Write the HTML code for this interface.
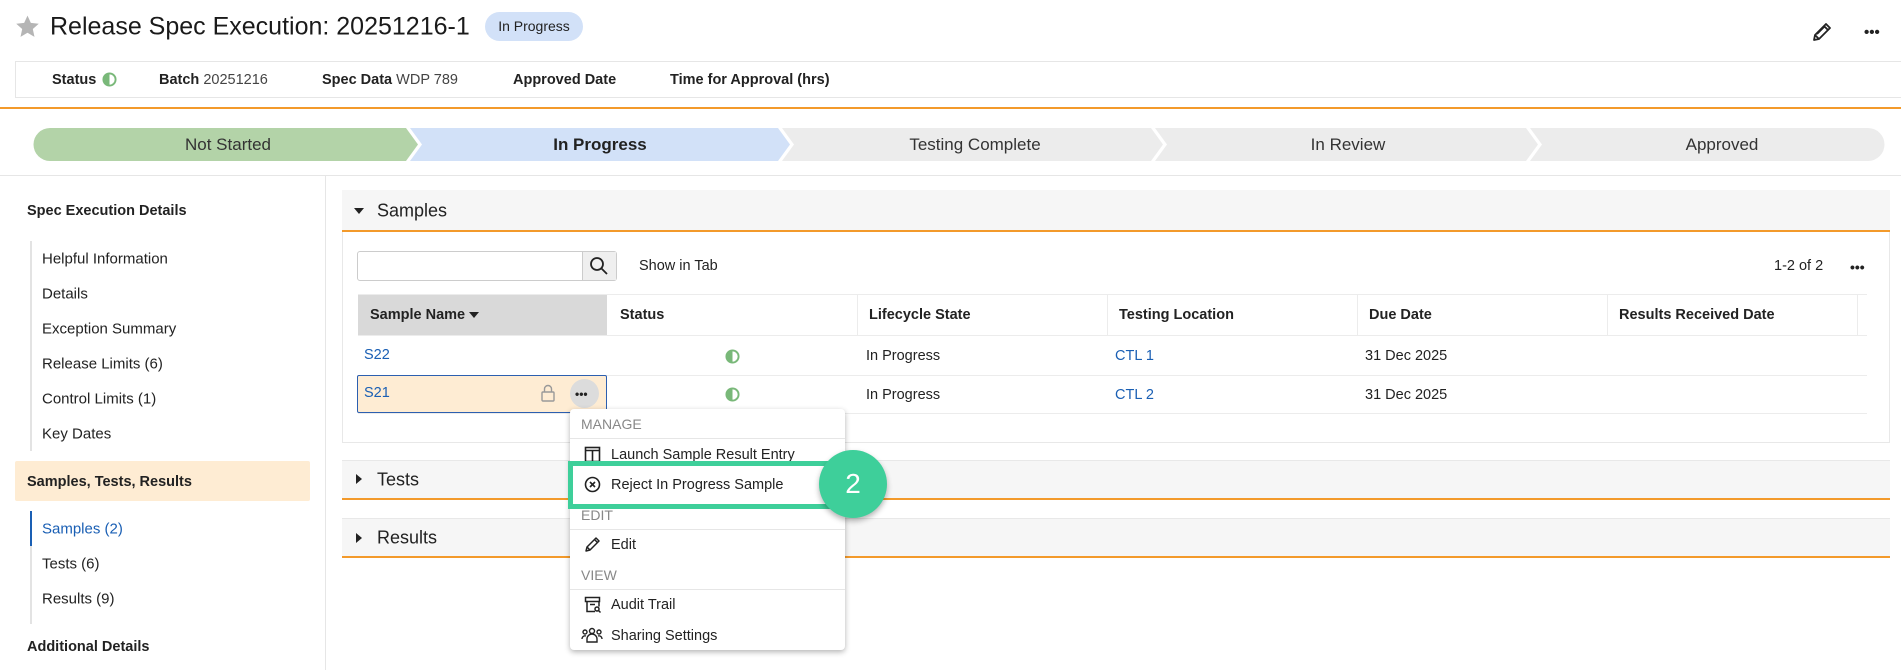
<!DOCTYPE html>
<html><head><meta charset="utf-8">
<style>
*{box-sizing:border-box;margin:0;padding:0}
body{width:1901px;height:670px;overflow:hidden;background:#fff;font-family:"Liberation Sans",Arial,sans-serif;color:#222;position:relative;font-size:15px}
.a{position:absolute;white-space:nowrap}
.b{font-weight:bold}
.blue{color:#1a5fb4}
.vc{transform:translateY(-50%)}
</style></head><body>

<!-- title -->
<svg class="a" style="left:15px;top:14px" width="25" height="25" viewBox="0 0 24 24"><path d="M12 1.5l3.2 7 7.6.8-5.7 5.1 1.6 7.5L12 18l-6.7 3.9 1.6-7.5L1.2 9.3l7.6-.8z" fill="#b5b5b5"/></svg>
<div class="a vc" style="left:50px;top:27px;font-size:25px;color:#1a1a1a">Release Spec Execution: 20251216-1</div>
<div class="a" style="left:485px;top:12px;width:98px;height:29px;border-radius:15px;background:#d2e1f8;font-size:14px;line-height:29px;text-align:center;color:#222">In Progress</div>
<svg class="a" style="left:1810px;top:20px" width="24" height="24" viewBox="0 0 24 24" fill="none" stroke="#222" stroke-width="1.8" stroke-linejoin="round"><path d="M4 20l1-5L16 4l4 4L9 19z M14 6l4 4 M5 15l4 4 M7 14l8-8"/></svg>
<div class="a" style="left:1864px;top:29px;font-size:15px;line-height:8px;letter-spacing:0px;font-weight:bold">•••</div>

<!-- info bar -->
<div class="a" style="left:15px;top:61px;width:1886px;height:37px;border:1px solid #e6e6e6;border-right:none"></div>
<div class="a vc" style="left:52px;top:80px;font-size:14.5px"><span class="b">Status</span></div>
<svg class="a" style="left:102px;top:72px" width="15" height="15" viewBox="0 0 16 16"><circle cx="8" cy="8" r="6.5" fill="#fff" stroke="#79b879" stroke-width="2"/><path d="M8 1.5a6.5 6.5 0 0 0 0 13z" fill="#79b879"/></svg>
<div class="a vc" style="left:159px;top:80px;font-size:14.5px"><span class="b">Batch</span> <span style="color:#444">20251216</span></div>
<div class="a vc" style="left:322px;top:80px;font-size:14.5px"><span class="b">Spec Data</span> <span style="color:#444">WDP 789</span></div>
<div class="a vc" style="left:513px;top:80px;font-size:14.5px" ><span class="b">Approved Date</span></div>
<div class="a vc" style="left:670px;top:80px;font-size:14.5px"><span class="b">Time for Approval (hrs)</span></div>
<div class="a" style="left:0;top:107px;width:1901px;height:2px;background:#f39a2b"></div>

<!-- path bar -->
<svg class="a" style="left:0;top:128px" width="1901" height="34" viewBox="0 128 1901 34">
<path d="M50 128H406L418 144.5L406 161H50A16.5 16.5 0 0 1 50 128Z" fill="#b3d3a8"/>
<path d="M410 128H778L790 144.5L778 161H410L422 144.5Z" fill="#d2e1f8"/>
<path d="M782 128H1151L1163 144.5L1151 161H782L794 144.5Z" fill="#ececec"/>
<path d="M1155 128H1526L1538 144.5L1526 161H1155L1167 144.5Z" fill="#ececec"/>
<path d="M1530 128H1868A16.5 16.5 0 0 1 1868 161H1530L1542 144.5Z" fill="#ececec"/>
</svg>
<div class="a vc" style="left:228px;top:145px;font-size:17px;transform:translate(-50%,-50%);color:#333">Not Started</div>
<div class="a vc b" style="left:600px;top:145px;font-size:17px;transform:translate(-50%,-50%)">In Progress</div>
<div class="a vc" style="left:975px;top:145px;font-size:17px;transform:translate(-50%,-50%);color:#333">Testing Complete</div>
<div class="a vc" style="left:1348px;top:145px;font-size:17px;transform:translate(-50%,-50%);color:#333">In Review</div>
<div class="a vc" style="left:1722px;top:145px;font-size:17px;transform:translate(-50%,-50%);color:#333">Approved</div>
<div class="a" style="left:0;top:175px;width:1901px;height:1px;background:#e6e6e6"></div>

<!-- sidebar -->
<div class="a" style="left:325px;top:176px;width:1px;height:494px;background:#e6e6e6"></div>
<div class="a vc b" style="left:27px;top:211px;font-size:14.5px">Spec Execution Details</div>
<div class="a" style="left:30px;top:241px;width:2px;height:210px;background:#e3e3e3"></div>
<div class="a vc" style="left:42px;top:259px">Helpful Information</div>
<div class="a vc" style="left:42px;top:294px">Details</div>
<div class="a vc" style="left:42px;top:329px">Exception Summary</div>
<div class="a vc" style="left:42px;top:364px">Release Limits (6)</div>
<div class="a vc" style="left:42px;top:399px">Control Limits (1)</div>
<div class="a vc" style="left:42px;top:434px">Key Dates</div>
<div class="a" style="left:15px;top:461px;width:295px;height:40px;background:#feecd3;border-radius:2px"></div>
<div class="a vc b" style="left:27px;top:482px;font-size:14.5px">Samples, Tests, Results</div>
<div class="a" style="left:30px;top:511px;width:2px;height:113px;background:#e3e3e3"></div>
<div class="a" style="left:30px;top:511px;width:2px;height:35px;background:#1a5fb4"></div>
<div class="a vc blue" style="left:42px;top:529px">Samples (2)</div>
<div class="a vc" style="left:42px;top:564px">Tests (6)</div>
<div class="a vc" style="left:42px;top:599px">Results (9)</div>
<div class="a vc b" style="left:27px;top:647px;font-size:14.5px">Additional Details</div>

<!-- Samples panel -->
<div class="a" style="left:342px;top:190px;width:1548px;height:253px;border:1px solid #e8e8e8"></div>
<div class="a" style="left:342px;top:190px;width:1548px;height:42px;background:#f6f6f6;border-bottom:2px solid #f39a2b"></div>
<div class="a" style="left:354px;top:208px;width:0;height:0;border-left:5px solid transparent;border-right:5px solid transparent;border-top:6px solid #222"></div>
<div class="a vc" style="left:377px;top:211px;font-size:18px">Samples</div>
<div class="a" style="left:357px;top:251px;width:260px;height:30px;border:1px solid #ccc;border-radius:3px"></div>
<div class="a" style="left:582px;top:252px;width:34px;height:28px;background:#efefef;border-left:1px solid #ccc"></div>
<svg class="a" style="left:589px;top:256px" width="20" height="20" viewBox="0 0 20 20" fill="none" stroke="#222" stroke-width="1.8"><circle cx="8" cy="8" r="6"/><path d="M12.5 12.5L18 18"/></svg>
<div class="a vc" style="left:639px;top:266px;font-size:14.5px">Show in Tab</div>
<div class="a vc" style="left:1774px;top:266px;font-size:14.5px">1-2 of 2</div>
<div class="a" style="left:1850px;top:263px;font-size:14px;line-height:8px;letter-spacing:0px;font-weight:bold">•••</div>

<!-- table -->
<div class="a" style="left:358px;top:294px;width:1509px;height:1px;background:#ececec"></div>
<div class="a" style="left:358px;top:295px;width:249px;height:41px;background:#d9d9d9"></div>
<div class="a" style="left:857px;top:295px;width:1px;height:41px;background:#ececec"></div>
<div class="a" style="left:1107px;top:295px;width:1px;height:41px;background:#ececec"></div>
<div class="a" style="left:1357px;top:295px;width:1px;height:41px;background:#ececec"></div>
<div class="a" style="left:1607px;top:295px;width:1px;height:41px;background:#ececec"></div>
<div class="a" style="left:1857px;top:295px;width:1px;height:41px;background:#ececec"></div>
<div class="a" style="left:358px;top:335px;width:1509px;height:1px;background:#ececec"></div>
<div class="a vc b" style="left:370px;top:315px;font-size:14.5px">Sample Name <span style="display:inline-block;border-left:5px solid transparent;border-right:5px solid transparent;border-top:6px solid #222;vertical-align:middle"></span></div>
<div class="a vc b" style="left:620px;top:315px;font-size:14.5px">Status</div>
<div class="a vc b" style="left:869px;top:315px;font-size:14.5px">Lifecycle State</div>
<div class="a vc b" style="left:1119px;top:315px;font-size:14.5px">Testing Location</div>
<div class="a vc b" style="left:1369px;top:315px;font-size:14.5px">Due Date</div>
<div class="a vc b" style="left:1619px;top:315px;font-size:14.5px">Results Received Date</div>

<div class="a vc blue" style="left:364px;top:355px;font-size:14.5px">S22</div>
<svg class="a" style="left:725px;top:349px" width="15" height="15" viewBox="0 0 16 16"><circle cx="8" cy="8" r="6.5" fill="#fff" stroke="#79b879" stroke-width="2"/><path d="M8 1.5a6.5 6.5 0 0 0 0 13z" fill="#79b879"/></svg>
<div class="a vc" style="left:866px;top:356px;font-size:14.5px">In Progress</div>
<div class="a vc blue" style="left:1115px;top:356px;font-size:14.5px">CTL 1</div>
<div class="a vc" style="left:1365px;top:356px;font-size:14.5px">31 Dec 2025</div>
<div class="a" style="left:358px;top:375px;width:1509px;height:1px;background:#ececec"></div>

<div class="a" style="left:357px;top:375px;width:250px;height:38px;background:#feecd3;border:1px solid #2c5fb0;border-radius:2px"></div>
<div class="a vc blue" style="left:364px;top:393px;font-size:14.5px">S21</div>
<svg class="a" style="left:540px;top:384px" width="16" height="18" viewBox="0 0 16 18" fill="none" stroke="#999" stroke-width="1.4"><rect x="2" y="8" width="12" height="9" rx="1"/><path d="M4.5 8V5a3.5 3.5 0 0 1 7 0v3"/></svg>
<div class="a" style="left:570px;top:379px;width:29px;height:29px;border-radius:50%;background:#dcdcdc"></div>
<div class="a" style="left:575px;top:390px;font-size:12px;line-height:8px;letter-spacing:0px;font-weight:bold">•••</div>
<svg class="a" style="left:725px;top:387px" width="15" height="15" viewBox="0 0 16 16"><circle cx="8" cy="8" r="6.5" fill="#fff" stroke="#79b879" stroke-width="2"/><path d="M8 1.5a6.5 6.5 0 0 0 0 13z" fill="#79b879"/></svg>
<div class="a vc" style="left:866px;top:395px;font-size:14.5px">In Progress</div>
<div class="a vc blue" style="left:1115px;top:395px;font-size:14.5px">CTL 2</div>
<div class="a vc" style="left:1365px;top:395px;font-size:14.5px">31 Dec 2025</div>
<div class="a" style="left:358px;top:413px;width:1509px;height:1px;background:#ececec"></div>

<!-- Tests / Results panels -->
<div class="a" style="left:342px;top:460px;width:1548px;height:40px;background:#f6f6f6;border-top:1px solid #e8e8e8;border-bottom:2px solid #f39a2b"></div>
<div class="a" style="left:356px;top:474px;width:0;height:0;border-top:5px solid transparent;border-bottom:5px solid transparent;border-left:6px solid #222"></div>
<div class="a vc" style="left:377px;top:480px;font-size:18px">Tests</div>
<div class="a" style="left:342px;top:518px;width:1548px;height:40px;background:#f6f6f6;border-top:1px solid #e8e8e8;border-bottom:2px solid #f39a2b"></div>
<div class="a" style="left:356px;top:533px;width:0;height:0;border-top:5px solid transparent;border-bottom:5px solid transparent;border-left:6px solid #222"></div>
<div class="a vc" style="left:377px;top:538px;font-size:18px">Results</div>

<!-- menu -->
<div class="a" style="left:570px;top:409px;width:275px;height:241px;background:#fff;border-radius:4px;box-shadow:0 2px 6px rgba(0,0,0,.3)"></div>
<div class="a vc" style="left:581px;top:424px;font-size:14px;color:#888">MANAGE</div>
<div class="a" style="left:570px;top:438px;width:275px;height:1px;background:#e6e6e6"></div>
<svg class="a" style="left:584px;top:446px" width="17" height="17" viewBox="0 0 17 17" fill="none" stroke="#222" stroke-width="1.6"><rect x="1.5" y="1.5" width="14" height="14"/><path d="M1.5 4.5h14M8.5 4.5v11"/></svg>
<div class="a vc" style="left:611px;top:455px;font-size:14.5px">Launch Sample Result Entry</div>
<div class="a vc" style="left:581px;top:515px;font-size:14px;color:#888">EDIT</div>
<div class="a" style="left:568px;top:461px;width:286px;height:48px;border:5px solid #3ecf9a;background:#fff"></div>
<svg class="a" style="left:584px;top:476px" width="17" height="17" viewBox="0 0 17 17" fill="none" stroke="#222" stroke-width="1.6"><circle cx="8.5" cy="8.5" r="7"/><path d="M6 6l5 5M11 6l-5 5"/></svg>
<div class="a vc" style="left:611px;top:485px;font-size:14.5px">Reject In Progress Sample</div>
<div class="a" style="left:819px;top:450px;width:68px;height:68px;border-radius:50%;background:#3ecf9a;box-shadow:0 3px 6px rgba(0,0,0,.3);color:#fff;font-size:28px;line-height:68px;text-align:center">2</div>
<div class="a" style="left:570px;top:529px;width:275px;height:1px;background:#e6e6e6"></div>
<svg class="a" style="left:584px;top:536px" width="17" height="17" viewBox="0 0 17 17" fill="none" stroke="#222" stroke-width="1.5" stroke-linejoin="round"><path d="M2 15l1-4 9-9 3 3-9 9z M10.5 3.5l3 3 M3 11l3 3"/></svg>
<div class="a vc" style="left:611px;top:545px;font-size:14.5px">Edit</div>
<div class="a vc" style="left:581px;top:575px;font-size:14px;color:#888">VIEW</div>
<div class="a" style="left:570px;top:589px;width:275px;height:1px;background:#e6e6e6"></div>
<svg class="a" style="left:584px;top:596px" width="18" height="18" viewBox="0 0 18 18" fill="none" stroke="#222" stroke-width="1.5"><rect x="1.5" y="1.5" width="14" height="4"/><path d="M3 5.5v10h8M15 5.5v5M6 8.5h5"/><circle cx="13" cy="13" r="2"/><path d="M14.5 14.5l2 2"/></svg>
<div class="a vc" style="left:611px;top:605px;font-size:14.5px">Audit Trail</div>
<svg class="a" style="left:581px;top:627px" width="22" height="17" viewBox="0 0 22 17" fill="none" stroke="#222" stroke-width="1.4"><circle cx="11" cy="4" r="2.5"/><circle cx="4" cy="5" r="2"/><circle cx="18" cy="5" r="2"/><path d="M6 15v-3a5 5 0 0 1 10 0v3z M1 12a3 3 0 0 1 4-3 M21 12a3 3 0 0 0-4-3"/></svg>
<div class="a vc" style="left:611px;top:636px;font-size:14.5px">Sharing Settings</div>

</body></html>
